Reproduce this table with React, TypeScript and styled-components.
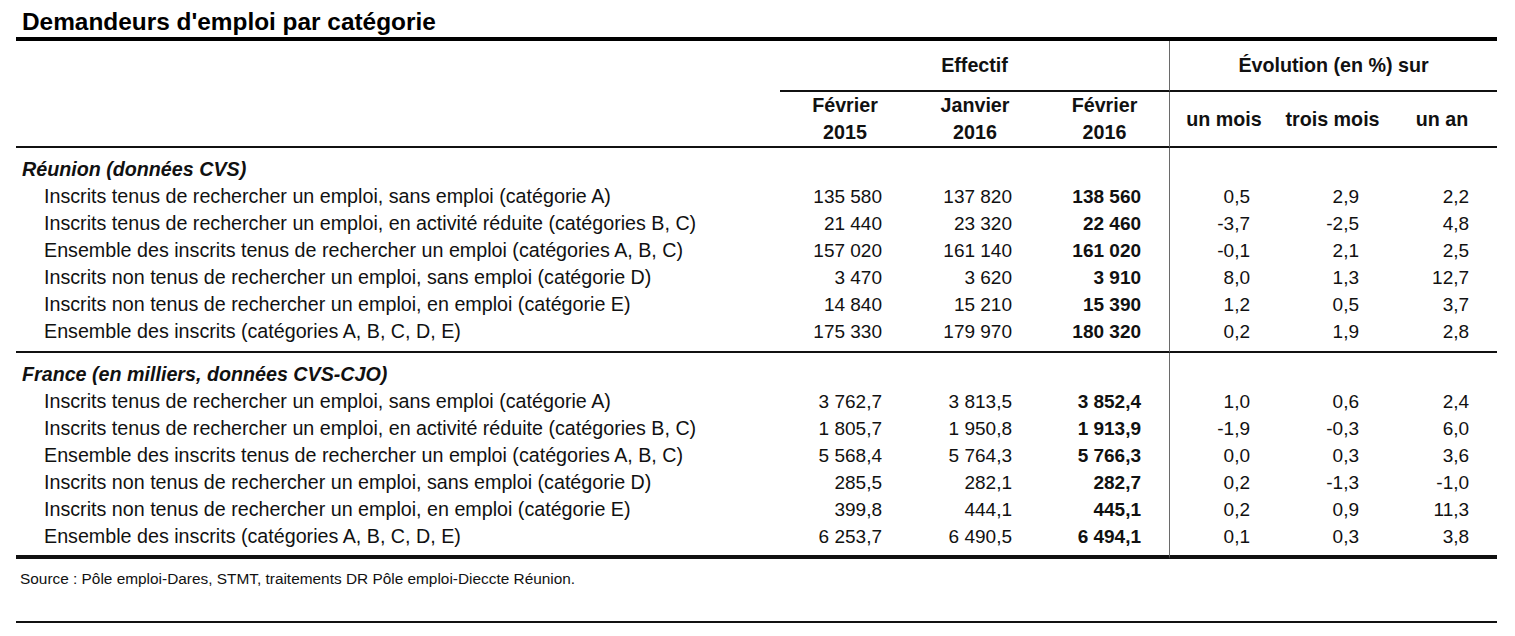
import React from "react";
import styled, { createGlobalStyle } from "styled-components";

const GlobalStyle = createGlobalStyle`
  html, body { margin: 0; padding: 0; background: #fff; }
  body { font-family: "Liberation Sans", Arial, Helvetica, sans-serif; color: #111; }
`;

const Page = styled.div`
  width: 1481px;
  padding-left: 16px;
`;

const Title = styled.h1`
  margin: 0;
  padding: 9px 0 0 6px;
  height: 28px;
  font-size: 24.4px;
  line-height: 26px;
  font-weight: 700;
  color: #000;
`;

const Table = styled.table`
  width: 1481px;
  table-layout: fixed;
  border-collapse: separate;
  border-spacing: 0;
  border-top: 4px solid #000;
`;

const HeadCell = styled.th<{ $divider?: boolean; $rule?: boolean; $h?: number }>`
  padding: 0;
  font-size: 19.7px;
  font-weight: 700;
  text-align: center;
  vertical-align: middle;
  line-height: 27px;
  color: #111;
  height: ${(p) => (p.$h ? `${p.$h}px` : "auto")};
  border-left: ${(p) => (p.$divider ? "1px solid #6a6a6a" : "0")};
  border-bottom: ${(p) => (p.$rule ? "2px solid #111" : "0")};
`;

const Cell = styled.td<{
  $kind: "label" | "section" | "num";
  $bold?: boolean;
  $divider?: boolean;
  $top?: number;
  $bottom?: number;
  $rule?: number;
}>`
  padding: 0;
  padding-top: ${(p) => p.$top ?? 0}px;
  padding-bottom: ${(p) => p.$bottom ?? 0}px;
  padding-left: ${(p) => (p.$kind === "label" ? "28px" : p.$kind === "section" ? "6px" : "0")};
  padding-right: ${(p) => (p.$kind === "num" ? "28px" : "0")};
  font-size: ${(p) => (p.$kind === "num" ? "19px" : "19.7px")};
  line-height: 27px;
  white-space: nowrap;
  text-align: ${(p) => (p.$kind === "num" ? "right" : "left")};
  font-weight: ${(p) => (p.$bold || p.$kind === "section" ? 700 : 400)};
  font-style: ${(p) => (p.$kind === "section" ? "italic" : "normal")};
  border-left: ${(p) => (p.$divider ? "1px solid #6a6a6a" : "0")};
  border-bottom: ${(p) => (p.$rule ? `${p.$rule}px solid #111` : "0")};
`;

const Source = styled.p`
  margin: 0;
  padding: 11px 0 0 4px;
  height: 51px;
  font-size: 15.4px;
  line-height: 18px;
  color: #111;
`;

const BottomRule = styled.div`
  height: 2px;
  background: #111;
`;

type Row = { label: string; v: string[] };

const sections: { title: string; rows: Row[] }[] = [
  {
    title: "Réunion (données CVS)",
    rows: [
      { label: "Inscrits tenus de rechercher un emploi, sans emploi (catégorie A)", v: ["135 580", "137 820", "138 560", "0,5", "2,9", "2,2"] },
      { label: "Inscrits tenus de rechercher un emploi, en activité réduite (catégories B, C)", v: ["21 440", "23 320", "22 460", "-3,7", "-2,5", "4,8"] },
      { label: "Ensemble des inscrits tenus de rechercher un emploi (catégories A, B, C)", v: ["157 020", "161 140", "161 020", "-0,1", "2,1", "2,5"] },
      { label: "Inscrits non tenus de rechercher un emploi, sans emploi (catégorie D)", v: ["3 470", "3 620", "3 910", "8,0", "1,3", "12,7"] },
      { label: "Inscrits non tenus de rechercher un emploi, en emploi (catégorie E)", v: ["14 840", "15 210", "15 390", "1,2", "0,5", "3,7"] },
      { label: "Ensemble des inscrits (catégories A, B, C, D, E)", v: ["175 330", "179 970", "180 320", "0,2", "1,9", "2,8"] },
    ],
  },
  {
    title: "France (en milliers, données CVS-CJO)",
    rows: [
      { label: "Inscrits tenus de rechercher un emploi, sans emploi (catégorie A)", v: ["3 762,7", "3 813,5", "3 852,4", "1,0", "0,6", "2,4"] },
      { label: "Inscrits tenus de rechercher un emploi, en activité réduite (catégories B, C)", v: ["1 805,7", "1 950,8", "1 913,9", "-1,9", "-0,3", "6,0"] },
      { label: "Ensemble des inscrits tenus de rechercher un emploi (catégories A, B, C)", v: ["5 568,4", "5 764,3", "5 766,3", "0,0", "0,3", "3,6"] },
      { label: "Inscrits non tenus de rechercher un emploi, sans emploi (catégorie D)", v: ["285,5", "282,1", "282,7", "0,2", "-1,3", "-1,0"] },
      { label: "Inscrits non tenus de rechercher un emploi, en emploi (catégorie E)", v: ["399,8", "444,1", "445,1", "0,2", "0,9", "11,3"] },
      { label: "Ensemble des inscrits (catégories A, B, C, D, E)", v: ["6 253,7", "6 490,5", "6 494,1", "0,1", "0,3", "3,8"] },
    ],
  },
];

export default function App() {
  return (
    <>
      <GlobalStyle />
      <Page>
        <Title>Demandeurs d'emploi par catégorie</Title>
        <Table>
          <colgroup>
            <col style={{ width: 764 }} />
            <col style={{ width: 130 }} />
            <col style={{ width: 130 }} />
            <col style={{ width: 129 }} />
            <col style={{ width: 109 }} />
            <col style={{ width: 109 }} />
            <col style={{ width: 110 }} />
          </colgroup>
          <thead>
            <tr>
              <HeadCell rowSpan={2} $rule />
              <HeadCell colSpan={3} $rule $h={49}>Effectif</HeadCell>
              <HeadCell colSpan={3} $rule $divider $h={49}>Évolution (en %) sur</HeadCell>
            </tr>
            <tr>
              <HeadCell $rule $h={54}>Février<br />2015</HeadCell>
              <HeadCell $rule $h={54}>Janvier<br />2016</HeadCell>
              <HeadCell $rule $h={54}>Février<br />2016</HeadCell>
              <HeadCell $rule $divider $h={54}>un mois</HeadCell>
              <HeadCell $rule $h={54}>trois mois</HeadCell>
              <HeadCell $rule $h={54}>un an</HeadCell>
            </tr>
          </thead>
          {sections.map((s, si) => {
            const lastSection = si === sections.length - 1;
            return (
              <tbody key={s.title}>
                <tr>
                  <Cell $kind="section" $top={8}>{s.title}</Cell>
                  <Cell $kind="num" $top={8} />
                  <Cell $kind="num" $top={8} />
                  <Cell $kind="num" $top={8} />
                  <Cell $kind="num" $top={8} $divider />
                  <Cell $kind="num" $top={8} />
                  <Cell $kind="num" $top={8} />
                </tr>
                {s.rows.map((r, ri) => {
                  const isLast = ri === s.rows.length - 1;
                  const bottom = isLast ? (lastSection ? 5 : 6) : 0;
                  const rule = isLast ? (lastSection ? 4 : 2) : 0;
                  return (
                    <tr key={r.label}>
                      <Cell $kind="label" $bottom={bottom} $rule={rule}>{r.label}</Cell>
                      {r.v.map((val, vi) => (
                        <Cell
                          key={vi}
                          $kind="num"
                          $bold={vi === 2}
                          $divider={vi === 3}
                          $bottom={bottom}
                          $rule={rule}
                        >
                          {val}
                        </Cell>
                      ))}
                    </tr>
                  );
                })}
              </tbody>
            );
          })}
        </Table>
        <Source>Source : Pôle emploi-Dares, STMT, traitements DR Pôle emploi-Dieccte Réunion.</Source>
        <BottomRule />
      </Page>
    </>
  );
}
